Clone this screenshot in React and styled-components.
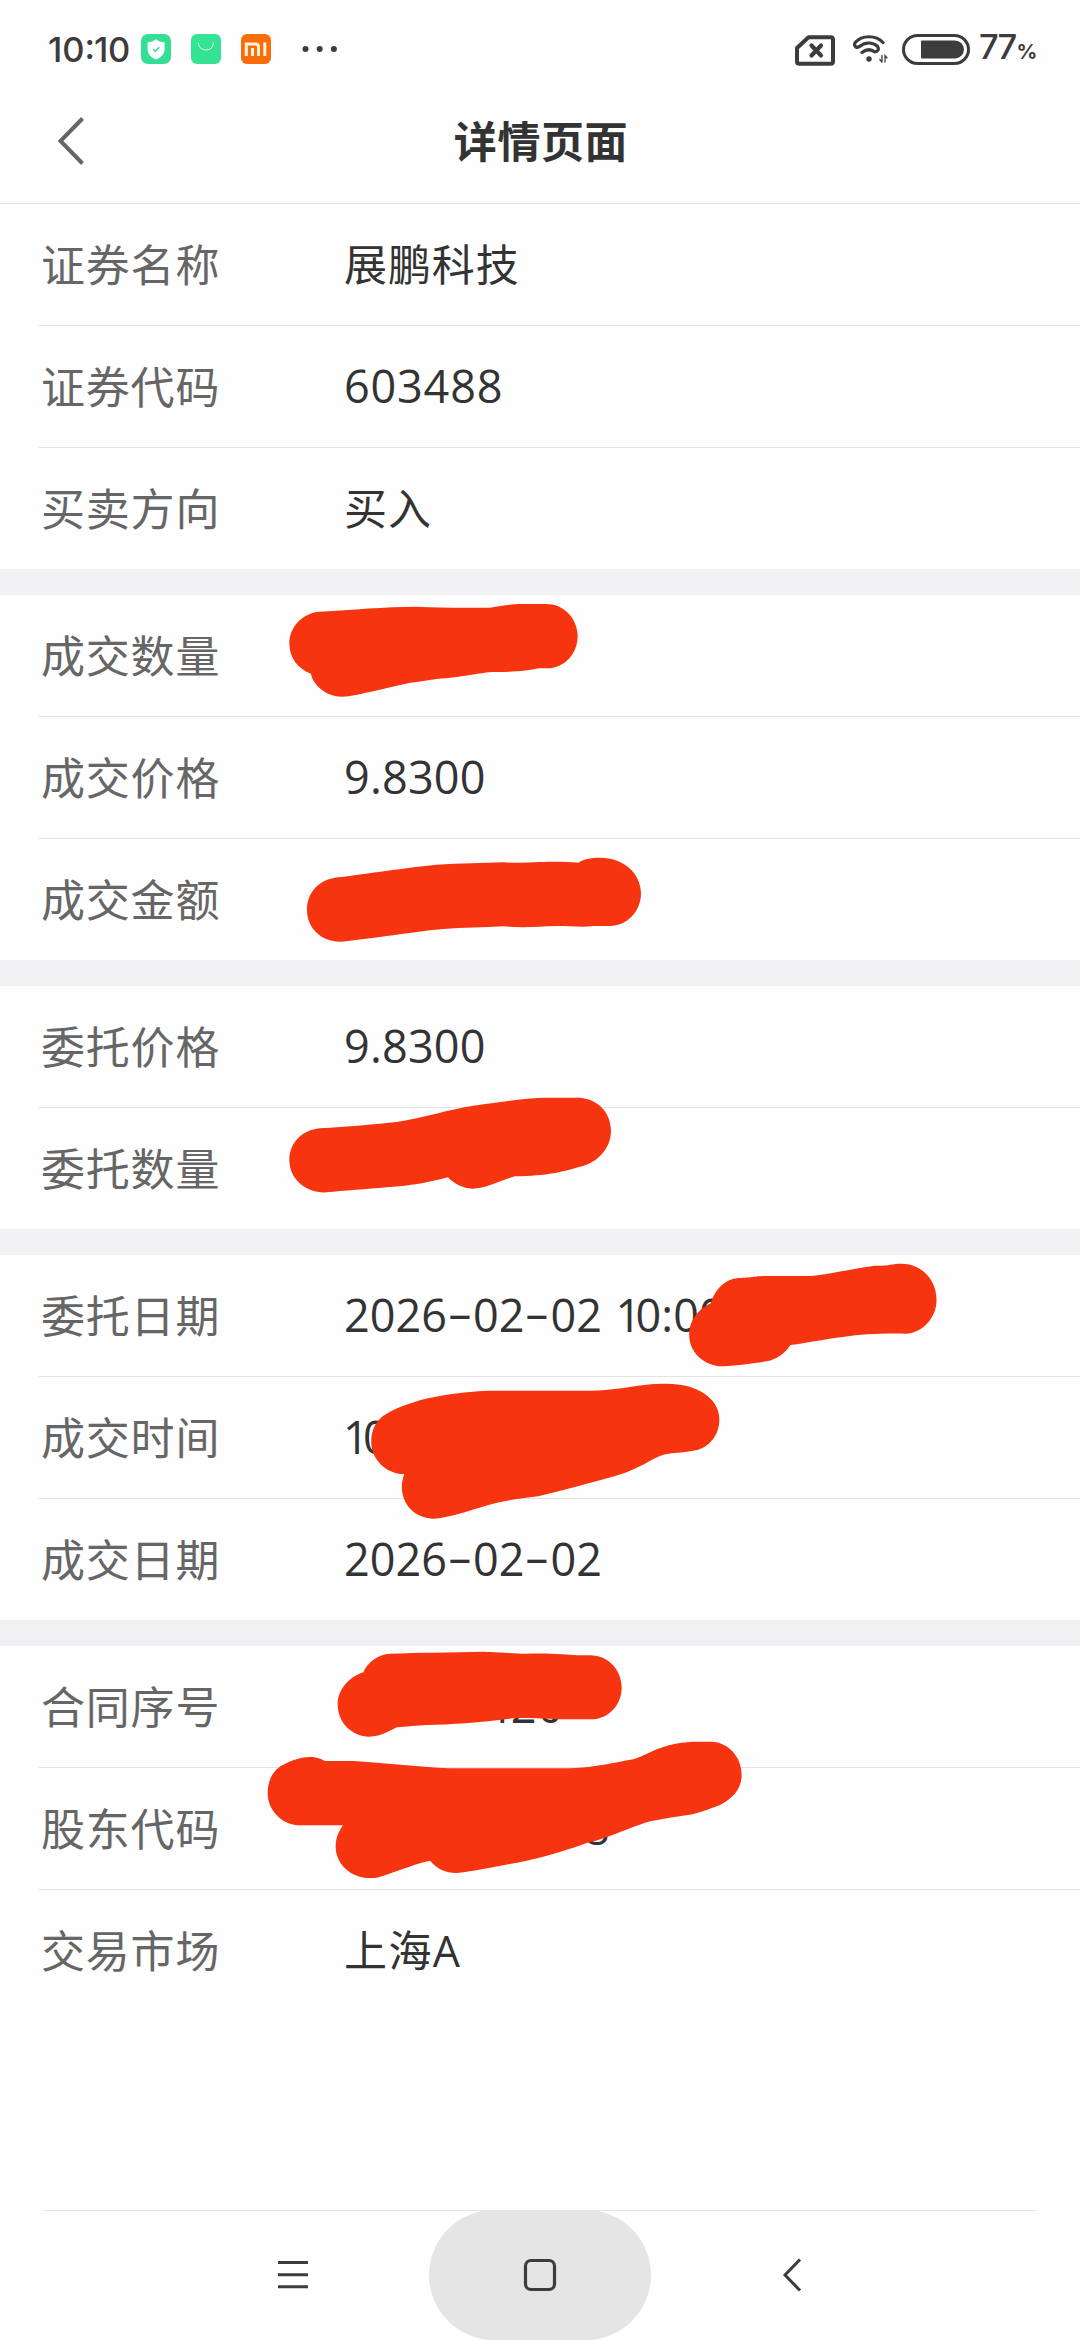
import styled, { createGlobalStyle } from "styled-components";

const GlobalStyle = createGlobalStyle`
    * { box-sizing: border-box; }
    body {
        margin: 0;
        background-color: #fefefe;
        font-family: "Open Sans", "Noto Sans CJK SC", sans-serif;
    }
`
const Screen = styled.div`
    position: relative;
    display: flex;
    flex-direction: column;
    width: 1080px;
    height: 2340px;
    overflow: hidden;
    color: #333;
`
const StatusBar = styled.div`
    display: flex;
    align-items: center;
    justify-content: space-between;
    height: 98px;
    padding: 0 46px 0 49px;
    color: #3c3c3c;
    font-family: Inter, sans-serif;
`
const StatusGroup = styled.div`
    display: flex;
    align-items: center;
`
const Clock = styled.span`
    width: 92px;
    font-size: 34.5px;
    font-weight: 500;
    line-height: 99px;
    white-space: nowrap;
`
const AppIcon = styled.svg`
    width: 30px;
    height: 30px;
    margin-right: 20px;
`
const Dots = styled.svg`
    width: 36px;
    height: 8px;
    margin-left: 11px;
`
const SimIcon = styled.svg`
    width: 42px;
    height: 33px;
    margin-top: 3px;
`
const WifiIcon = styled.svg`
    width: 36px;
    height: 30px;
    margin: 0 14px 0 16px;
`
const BatteryIcon = styled.svg`
    width: 68px;
    height: 31px;
`
const Level = styled.span`
    width: 55px;
    margin-left: 9px;
    font-size: 34.5px;
    font-weight: 500;
    line-height: 101px;
    letter-spacing: -1.8px;
    white-space: nowrap;
    small {
        font-size: 20.5px;
        font-weight: 700;
        margin-left: 1px;
    }
`
const Header = styled.header`
    display: grid;
    grid-template-columns: 120px 1fr 120px;
    align-items: center;
    height: 106px;
    padding-bottom: 20px;
    border-bottom: 1px solid #e4e4e4;
`
const BackIcon = styled.svg`
    width: 30px;
    height: 50px;
    margin-left: 56px;
`
const Title = styled.h1`
    margin: 2px 0 0 2px;
    text-align: center;
    font-size: 43px;
    font-weight: 700;
    line-height: 84px;
    letter-spacing: .6px;
`
const Section = styled.section`
    display: flex;
    flex-direction: column;
    padding-left: 39px;
    border-bottom: ${props => props.last ? '0' : '26px solid #f1f1f4'};
`
const Row = styled.div`
    display: flex;
    height: 122px;
    line-height: 121px;
    white-space: nowrap;
    border-bottom: 1px solid #e4e4e4;
    &:last-child {
        height: 121px;
        border-bottom: 0;
    }
`
const Label = styled.div`
    width: 305px;
    padding-left: 2px;
    font-size: 44px;
    line-height: 123px;
    letter-spacing: .8px;
    color: #666;
`
const Value = styled.div`
    padding-left: ${props => props.indent || 0}px;
    font-size: ${props => props.numeric ? 45 : 43}px;
    line-height: ${props => props.numeric ? 119 : 121}px;
    letter-spacing: ${props => props.spacing || 0}px;
    word-spacing: 3px;
`
const Dash = styled.span`
    display: inline-block;
    width: 26px;
    text-align: center;
    letter-spacing: 0;
    transform: translateY(-2px) scaleX(1.75);
`
const One = styled.span`
    margin-left: -1px;
    letter-spacing: ${props => props.trim}px;
`
const Scribbles = styled.svg`
    position: absolute;
    top: 0;
    left: 0;
    width: 1080px;
    height: 2340px;
    pointer-events: none;
`
const NavBar = styled.nav`
    display: grid;
    grid-template-columns: 1fr 222px 1fr;
    height: 130px;
    margin: auto 44px 0;
    box-shadow: inset 0 1px 0 #e4e4e4;
`
const NavButton = styled.div`
    display: flex;
    align-items: center;
    justify-content: ${props => props.side || 'center'};
    padding: ${props => props.pad || '0'};
    background-color: ${props => props.active ? '#e5e5e5' : 'transparent'};
    border-radius: 65px;
    svg {
        display: block;
    }
`

const sections = [
    [
        { label: "证券名称", value: "展鹏科技", spacing: 0.9 },
        { label: "证券代码", value: "603488", numeric: true, spacing: 0.8 },
        { label: "买卖方向", value: "买入", spacing: 0.9 },
    ],
    [
        { label: "成交数量" },
        { label: "成交价格", value: "9.8300", numeric: true, spacing: 0.2 },
        { label: "成交金额" },
    ],
    [
        { label: "委托价格", value: "9.8300", numeric: true, spacing: 0.2 },
        { label: "委托数量" },
    ],
    [
        { label: "委托日期", value: "2026-02-02 10:00", numeric: true },
        { label: "成交时间", value: "10", numeric: true },
        { label: "成交日期", value: "2026-02-02", numeric: true },
    ],
    [
        { label: "合同序号", value: "420", numeric: true, indent: 140, spacing: 1 },
        { label: "股东代码", value: "8", numeric: true, indent: 240 },
        { label: "交易市场", value: "上海A", spacing: 1.4 },
    ],
]

// hand drawn marks over the private values
const marks = [
    {
        at: "translate(270 580) scale(.33333)",
        d: "M150 95C250 90 340 80 440 80C510 84 580 83 660 83C700 78 720 72 760 72L830 72C885 72 923 120 923 168C923 220 885 265 830 265L808 265C770 272 730 277 665 276C620 280 580 291 500 297C460 303 420 308 390 315L310 334C280 339 250 350 215 350C170 350 128 315 123 281C85 268 58 235 58 190C58 140 100 97 150 95Z",
    },
    {
        at: "translate(270 580) scale(.33333)",
        d: "M205 892C260 886 390 865 500 854C570 850 640 850 700 847C770 852 820 841 925 848C945 835 965 833 990 833C1060 833 1113 880 1113 940C1113 995 1070 1038 1020 1038L970 1038C940 1043 900 1038 860 1038C800 1040 760 1044 700 1039C640 1043 580 1043 520 1047C440 1054 350 1070 215 1085C155 1087 111 1045 111 990C111 935 150 897 205 892Z",
    },
    {
        at: "translate(270 960) scale(.33333)",
        d: "M150 505C230 500 320 493 380 486C460 474 540 447 610 437C680 428 760 414 830 413L925 413C985 415 1023 460 1023 512C1023 560 990 600 945 616C880 636 830 648 735 649C700 658 650 686 607 686C580 686 550 670 534 652C480 666 430 677 350 682C290 687 220 692 170 697C105 700 58 655 58 600C58 550 95 510 150 505Z",
    },
    {
        at: "translate(330 1240) scale(.40816 .33333)",
        d: "M1000 114C1040 113 1040 108 1070 108L1178 108C1230 102 1290 83 1335 77C1370 78 1375 71 1400 71C1450 71 1486 120 1486 180C1486 235 1450 280 1410 281C1340 280 1300 284 1260 290C1210 298 1170 308 1128 315C1115 340 1095 358 1070 364C1040 370 1000 376 963 379C915 379 880 335 880 285C880 240 905 205 933 190C943 145 970 117 1000 114Z",
    },
    {
        at: "translate(330 1240) scale(.40816 .33333)",
        d: "M200 489C250 466 340 453 400 452L640 452C720 450 750 431 825 431C900 431 954 475 954 538C954 585 930 620 900 630C870 638 850 637 825 642C790 650 760 690 690 711C630 730 570 752 510 769C460 777 420 782 370 802C330 815 300 832 255 836C210 836 176 795 176 740C176 725 179 712 182 702C135 702 101 655 101 605C101 570 112 545 130 528C150 511 175 498 200 489Z",
    },
    {
        at: "translate(250 1620) scale(.33333)",
        d: "M420 101C510 98 600 97 700 95C760 97 790 101 830 101C880 100 930 102 980 106L1020 106C1075 106 1115 150 1115 203C1115 255 1075 297 1025 298C970 298 930 298 900 296C850 294 820 293 790 295C700 307 600 314 530 315C500 316 470 320 440 322C415 335 390 350 358 350C305 350 263 307 263 253C263 210 295 172 340 157C352 127 385 102 420 101Z",
    },
    {
        at: "translate(250 1620) scale(.33333)",
        d: "M180 411C200 411 213 417 225 423L310 423C400 428 500 441 600 445L960 445C1040 442 1090 428 1150 418C1210 397 1240 365 1350 365L1385 365C1435 367 1475 410 1475 465C1475 505 1450 535 1410 555C1370 570 1350 578 1320 584C1270 591 1230 598 1195 605C1120 630 1050 662 1010 669C930 698 880 711 830 722C760 736 700 747 640 757C600 764 565 752 540 722C480 735 430 760 380 773C310 783 257 735 257 680C257 655 266 634 279 616L145 616C95 614 53 570 53 520C53 480 70 450 98 435C125 420 155 411 180 411Z",
    },
]

// the 1 is set narrow and the dash wide
const Digits = ({ text, trim = -5.7 }) => text.split("").map((char, i) => {
    if (char === "-") return <Dash key={i}>-</Dash>
    if (char === "1") return <One key={i} trim={trim}>1</One>
    return char
})

const Status = () => (
    <StatusBar>
        <StatusGroup>
            <Clock><Digits text="10:10" trim={-0.2}/></Clock>
            <AppIcon viewBox="0 0 30 30">
                <rect width="30" height="30" rx="7" fill="#34de95"/>
                <path d="M15 5.2C17.5 7.4 20 8 23.6 8.2V15C23.6 20 20 23.5 15 25.6C10 23.5 6.6 20 6.6 15V8.2C10 8 12.5 7.4 15 5.2Z" fill="#fff"/>
                <path d="M12 15L14.4 17.3L18.3 13.2" fill="none" stroke="#34de95" strokeWidth="1.5"/>
            </AppIcon>
            <AppIcon viewBox="0 0 30 30">
                <rect width="30" height="30" rx="6" fill="#34e393"/>
                <path d="M7.2 8.5C8.5 18.5 21.5 18.5 22.6 8.5" fill="none" stroke="#dffff0" strokeWidth="1.1"/>
            </AppIcon>
            <AppIcon viewBox="0 0 30 30">
                <rect width="30" height="30" rx="6" fill="#fb6d0b"/>
                <path d="M5.3 22V10H14.5Q17.5 10 17.5 13V22M11.5 14V22M23.8 8.5V22" fill="none" stroke="#fff3dc" strokeWidth="3"/>
            </AppIcon>
            <Dots viewBox="0 0 36 8">
                <circle cx="3.5" cy="4" r="3" fill="#3c3c3c"/>
                <circle cx="17.7" cy="4" r="3" fill="#3c3c3c"/>
                <circle cx="31.9" cy="4" r="3" fill="#3c3c3c"/>
            </Dots>
        </StatusGroup>
        <StatusGroup>
            <SimIcon viewBox="0 0 42 33" fill="none" stroke="#3c3c3c">
                <path d="M14.5 3.2H36.5Q39 3.2 39 5.5V27.5Q39 29.8 36.5 29.8H5.5Q3 29.8 3 27.5V14Z" strokeWidth="4" strokeLinejoin="round"/>
                <path d="M17.5 11.5L27 21.5M27 11.5L17.5 21.5" strokeWidth="4.2" strokeLinecap="round"/>
            </SimIcon>
            <WifiIcon viewBox="0 0 36 30" fill="none" stroke="#3c3c3c" strokeLinecap="round">
                <path d="M31 8.5C24 .8 10 .8 3.2 8.5C1.5 11.5 3.8 14.3 7 12.8C13 7.8 20.5 7.8 25.5 12.3C27.5 15.5 25.5 18 23 18C19 15 14.5 15 10 18.5" strokeWidth="3.2" strokeLinejoin="round"/>
                <circle cx="17" cy="25" r="2.7" fill="#3c3c3c" stroke="none"/>
                <path d="M30 21.5V28M27.8 25.5L30 28M33 28V21.5L35 24" strokeWidth="1.3"/>
            </WifiIcon>
            <BatteryIcon viewBox="0 0 68 31">
                <rect x="1.5" y="1.5" width="65" height="28" rx="14" fill="none" stroke="#3c3c3c" strokeWidth="3"/>
                <path d="M20 6.5H53A9 9 0 0 1 53 24.5H20Q19 24.5 19 23.5V7.5Q19 6.5 20 6.5Z" fill="#3c3c3c"/>
            </BatteryIcon>
            <Level>77<small>%</small></Level>
        </StatusGroup>
    </StatusBar>
)

export default function App() {
  return (
    <Screen>
        <GlobalStyle/>
        <Status/>
        <Header>
            <BackIcon viewBox="0 0 30 50">
                <path d="M26.5 2.5L4.5 25L26.5 47.5" fill="none" stroke="#666" strokeWidth="4"/>
            </BackIcon>
            <Title>详情页面</Title>
        </Header>
        {sections.map((rows, i) => (
            <Section key={i} last={i === sections.length - 1 ? 1 : undefined}>
                {rows.map(({ label, value, ...rest }) => (
                    <Row key={label}>
                        <Label>{label}</Label>
                        {value && <Value {...rest}><Digits text={value}/></Value>}
                    </Row>
                ))}
            </Section>
        ))}
        <NavBar>
            <NavButton side="flex-start" pad="0 0 0 234px">
                <svg width="30" height="30" viewBox="0 0 30 30" stroke="#3c3c3c" strokeWidth="3">
                    <path d="M0 2.5H30M0 14.7H30M0 26.8H30"/>
                </svg>
            </NavButton>
            <NavButton active={1}>
                <svg width="34" height="34" viewBox="0 0 34 34">
                    <rect x="2.5" y="2.5" width="29" height="29" rx="5.5" fill="none" stroke="#3c3c3c" strokeWidth="3.2"/>
                </svg>
            </NavButton>
            <NavButton side="flex-start" pad="0 0 0 131px">
                <svg width="22" height="34" viewBox="0 0 22 34">
                    <path d="M18 1.5L3 17L18 32.5" fill="none" stroke="#3c3c3c" strokeWidth="3"/>
                </svg>
            </NavButton>
        </NavBar>
        <Scribbles viewBox="0 0 1080 2340" fill="#f63410">
            {marks.map((mark, i) => <path key={i} transform={mark.at} d={mark.d}/>)}
        </Scribbles>
    </Screen>
  )
}
